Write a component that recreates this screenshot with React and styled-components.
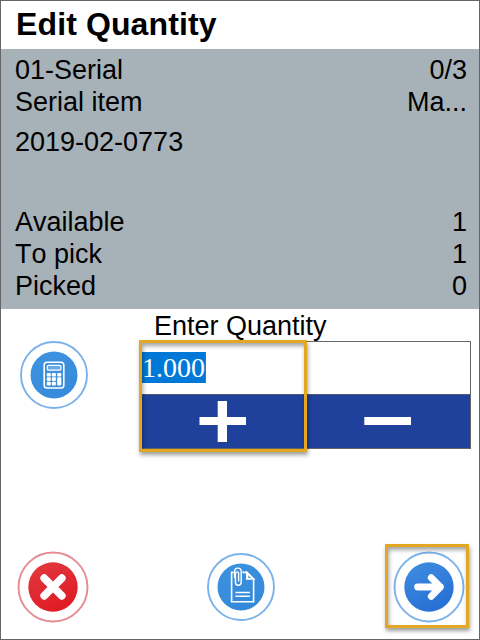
import React from "react";
import styled, { createGlobalStyle } from "styled-components";

const GlobalStyle = createGlobalStyle`
  * { box-sizing: border-box; }
  body { margin: 0; background: #fff; }
`;

const Screen = styled.main`
  width: 480px;
  height: 640px;
  border: 1px solid #666;
  background: #fff;
  color: #000;
  font: 27px/32px "Liberation Sans", Arial, sans-serif;
  font-kerning: none;
  display: flex;
  flex-direction: column;
  overflow: hidden;
`;

const Title = styled.h1`
  margin: 0;
  height: 48px;
  flex: none;
  padding-left: 15px;
  font-size: 32px;
  line-height: 46px;
  font-weight: 700;
  letter-spacing: 0.12px;
`;

const Details = styled.section`
  flex: none;
  height: 260px;
  padding: 5px 12px 0 14px;
  background: #a7b1b8;
`;

const Row = styled.div`
  display: flex;
  justify-content: space-between;
  height: 32px;
  margin-top: ${(p) => p.$gap || 0}px;
  white-space: nowrap;
`;

const Entry = styled.section`
  flex: none;
  display: grid;
  grid-template-columns: 140px 330px;
  grid-template-rows: 32px 108px;
`;

const Label = styled.label`
  grid-column: 1 / -1;
  padding: 1px 0 0 153px;
`;

const SideTool = styled.div`
  padding-left: 16.5px;
  margin-top: -2px;
`;

const Stepper = styled.div`
  position: relative;
  display: grid;
  grid-template-rows: 52px 54px;
  border: 1px solid #666;
`;

const Field = styled.div`
  display: flex;
  align-items: flex-start;
  padding-top: 10px;
  font-family: "Liberation Serif", "Times New Roman", serif;
  font-size: 28px;
  line-height: 31px;
`;

const Selected = styled.span`
  height: 31px;
  background: #0078d7;
  border-right: 1px solid #75695f;
  color: #fff;
`;

const Buttons = styled.div`
  display: grid;
  grid-template-columns: 1fr 1fr;
  border-top: 1px solid #505873;
  background: #1f419b;
`;

const StepButton = styled.button`
  border: 0;
  padding: 0;
  background: transparent;
  display: flex;
  svg { display: block; }
`;

const Highlight = styled.div`
  position: absolute;
  top: ${(p) => p.$top}px;
  left: ${(p) => p.$left}px;
  width: ${(p) => p.$w}px;
  height: ${(p) => p.$h}px;
  border: 3px solid #e4a724;
  box-shadow: 1px 3px 4px rgba(0, 0, 0, 0.38), inset 1px 3px 4px rgba(0, 0, 0, 0.36);
  pointer-events: none;
`;

const Footer = styled.footer`
  margin-top: auto;
  height: 88px;
  padding: 0 14px 0 16px;
  display: flex;
  justify-content: space-between;
  align-items: flex-start;
`;

const RoundButton = styled.button`
  position: relative;
  width: 72px;
  height: 72px;
  padding: 0;
  border: 0;
  background: transparent;
  > svg { display: block; }
`;

function Ring({ inner, outer, stroke, from, to, id, children }) {
  return (
    <svg width="72" height="72" viewBox="-36 -36 72 72">
      <defs>
        <linearGradient id={id} x1="0" y1="0" x2="0.5" y2="1">
          <stop stopColor={from} />
          <stop offset="1" stopColor={to} />
        </linearGradient>
      </defs>
      <circle r={outer} fill="#fff" stroke={stroke} strokeWidth="1.9" />
      <circle r={inner} fill={`url(#${id})`} />
      {children}
    </svg>
  );
}

function CalculatorIcon() {
  const keys = [];
  [-7.3, -2.2, 3.2].forEach((x) =>
    [-2.1, 2.3, 6.8].forEach((y) => {
      if (x !== 3.2 || y < 0) keys.push([x, y]);
    })
  );
  return (
    <Ring id="calc" inner="23.5" outer="33" stroke="#7bb2e9" from="#3e94df" to="#368bdb">
      <rect x="-9.8" y="-12.8" width="19.6" height="25.8" rx="2.8" fill="#3c90de" stroke="#fff" strokeWidth="1.6" />
      <rect x="-6.7" y="-9.6" width="13.6" height="4.8" rx="1.3" fill="#65aae7" stroke="#fff" strokeWidth="1.2" />
      {keys.map(([x, y]) => (
        <rect key={`${x}${y}`} x={x} y={y} width="4.1" height="3.6" rx="0.8" fill="#fff" />
      ))}
      <rect x="3.2" y="2.3" width="4.1" height="8.1" rx="0.8" fill="#fff" />
    </Ring>
  );
}

function ClipIcon() {
  return (
    <Ring id="clip" inner="23.5" outer="33" stroke="#7bb2e9" from="#3d92df" to="#348ada">
      <g fill="none" stroke="#fff" strokeWidth="1.6">
        <path d="M-7.3-14.6H-9.4V14.8H12.6V-8L5.8-14.6H1.5" />
        <path d="M5.8-14.6V-8H12.6Z" fill="#fff" />
        <path d="M7.4-11.5L10-9H7.4Z" fill="#3d92df" stroke="none" />
        <path d="M-5.6 5.5H8.9M-5.6 9.3H8.9" />
        <path d="M-6.4-9V-15.5C-6.4-20 .2-20 .2-15.5V-5C.2-.6-5.6-.6-5.6-5V-13.3C-5.6-15.7-2.4-15.7-2.4-13.3V-5.5" strokeWidth="1.4" />
      </g>
    </Ring>
  );
}

export default function App() {
  return (
    <>
      <GlobalStyle />
      <Screen>
        <Title>Edit Quantity</Title>
        <Details>
          <Row><span>01-Serial</span><span>0/3</span></Row>
          <Row><span>Serial item</span><span>Ma...</span></Row>
          <Row $gap={8}><span>2019-02-0773</span></Row>
          <Row $gap={48}><span>Available</span><span>1</span></Row>
          <Row><span>To pick</span><span>1</span></Row>
          <Row><span>Picked</span><span>0</span></Row>
        </Details>
        <Entry>
          <Label>Enter Quantity</Label>
          <SideTool>
            <RoundButton aria-label="Calculator"><CalculatorIcon /></RoundButton>
          </SideTool>
          <Stepper>
            <Field><Selected>1.000</Selected></Field>
            <Buttons>
              <StepButton aria-label="Increase">
                <svg width="164" height="53" viewBox="142 395 164 53">
                  <path d="M199.5 417H217.7V401H227V417H246V425H227V442H217.7V425H199.5Z" fill="#fff" />
                </svg>
              </StepButton>
              <StepButton aria-label="Decrease">
                <svg width="164" height="53" viewBox="306 395 164 53">
                  <path d="M364.3 417H411V425H364.3Z" fill="#fff" />
                </svg>
              </StepButton>
            </Buttons>
            <Highlight $top={-2} $left={-3} $w={168} $h={112} />
          </Stepper>
        </Entry>
        <Footer>
          <RoundButton aria-label="Cancel">
            <Ring id="cancel" inner="24.7" outer="34.5" stroke="#e58b92" from="#e23b40" to="#df1c26">
              <path d="M-8.8-8.8L8.8 8.8M8.8-8.8L-8.8 8.8" stroke="#fff" strokeWidth="7.7" strokeLinecap="round" />
            </Ring>
          </RoundButton>
          <RoundButton aria-label="Attachments"><ClipIcon /></RoundButton>
          <RoundButton aria-label="Next">
            <Ring id="next" inner="24.7" outer="34.5" stroke="#7bb2e9" from="#408fe1" to="#2870d4">
              <path d="M-11.4 0H11.4M2.2-9.3L11.4 0L2.2 9.3" fill="none" stroke="#fff" strokeWidth="6.8" strokeLinecap="round" strokeLinejoin="round" />
            </Ring>
            <Highlight $top={-7} $left={-8} $w={84} $h={84} />
          </RoundButton>
        </Footer>
      </Screen>
    </>
  );
}
